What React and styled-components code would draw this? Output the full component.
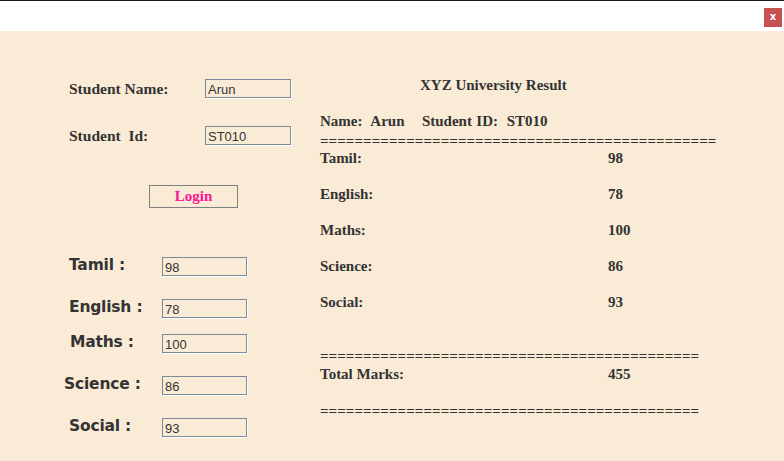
import styled, { createGlobalStyle } from "styled-components";

const GlobalStyle = createGlobalStyle`
  html, body {
    margin: 0;
    padding: 0;
    background: #fff;
  }
  * {
    box-sizing: border-box;
  }
`;

const Frame = styled.div`
  width: 784px;
  height: 461px;
  display: flex;
  flex-direction: column;
  overflow: hidden;
`;

const TitleBar = styled.div`
  height: 31px;
  border-top: 1px solid #1b1b1b;
  background: #fff;
  display: flex;
  justify-content: flex-end;
  align-items: flex-start;
  padding: 7px 2px 0 0;
`;

const CloseButton = styled.div`
  width: 18px;
  height: 19px;
  background: #c75050;
  color: #fff;
  font-family: "DejaVu Sans", sans-serif;
  font-weight: bold;
  font-size: 10px;
  line-height: 17px;
  text-align: center;
`;

const Body = styled.div`
  flex: 1;
  background: #faebd7;
  display: flex;
  padding: 46px 0 0 64px;
  color: #333;
`;

const LeftColumn = styled.div`
  width: 256px;
  display: flex;
  flex-direction: column;
`;

const FormRow = styled.div`
  display: grid;
  grid-template-columns: 141px 86px;
  align-items: center;
  margin-top: ${(p) => p.$mt}px;
`;

const FormLabel = styled.div`
  padding-left: 5px;
  font-family: "Liberation Serif", serif;
  font-weight: bold;
  font-size: 15.5px;
  line-height: 17px;
  white-space: pre;
`;

const Field = styled.div`
  width: ${(p) => p.$w}px;
  height: 19px;
  border: 1px solid #7a8a99;
  box-shadow: 1px 1px 0 #fff;
  padding: 3px 0 0 2px;
  font-family: "Liberation Sans", Arial, sans-serif;
  font-size: 13px;
  line-height: 14px;
  color: #333;
`;

const LoginButton = styled.div`
  margin: 40px 0 0 85px;
  width: 89px;
  height: 23px;
  border: 1px solid #808080;
  display: flex;
  align-items: center;
  justify-content: center;
  font-family: "Liberation Serif", serif;
  font-weight: bold;
  font-size: 15px;
  color: #ff1493;
  padding-bottom: 1px;
`;

const MarkRow = styled.div`
  display: grid;
  grid-template-columns: 98px 85px;
  align-items: center;
  margin-top: ${(p) => p.$mt}px;
`;

const MarkLabel = styled.div`
  padding-left: ${(p) => p.$indent}px;
  font-family: "DejaVu Sans", Verdana, sans-serif;
  font-weight: bold;
  font-size: 15.5px;
  line-height: 17px;
  letter-spacing: -0.2px;
  margin-top: -2px;
`;

const ResultColumn = styled.div`
  display: flex;
  flex-direction: column;
  font-family: "Liberation Serif", serif;
  font-weight: bold;
  font-size: 15px;
  line-height: 17px;
`;

const Title = styled.div`
  padding-left: 100px;
`;

const ResultLine = styled.div`
  display: grid;
  grid-template-columns: 288px auto;
  white-space: pre;
  word-spacing: ${(p) => p.$ws || 0}px;
  margin-top: ${(p) => p.$mt}px;
`;

const Separator = styled.div`
  white-space: pre;
  letter-spacing: 0.07px;
  margin-top: ${(p) => p.$mt}px;
`;

const subjects = [
  { label: "Tamil :", value: "98", mt: 49, indent: 5 },
  { label: "English :", value: "78", mt: 23, indent: 5 },
  { label: "Maths :", value: "100", mt: 16, indent: 6 },
  { label: "Science :", value: "86", mt: 23, indent: 0 },
  { label: "Social :", value: "93", mt: 23, indent: 5 },
];

const results = [
  ["Tamil:", "98"],
  ["English:", "78"],
  ["Maths:", "100"],
  ["Science:", "86"],
  ["Social:", "93"],
];

const App = () => {
  return (
    <Frame>
      <GlobalStyle />
      <TitleBar>
        <CloseButton>x</CloseButton>
      </TitleBar>
      <Body>
        <LeftColumn>
          <FormRow $mt={2}>
            <FormLabel>Student Name:</FormLabel>
            <Field $w={86}>Arun</Field>
          </FormRow>
          <FormRow $mt={28}>
            <FormLabel>Student  Id:</FormLabel>
            <Field $w={86}>ST010</Field>
          </FormRow>
          <LoginButton>Login</LoginButton>
          {subjects.map((s) => (
            <MarkRow key={s.label} $mt={s.mt}>
              <MarkLabel $indent={s.indent}>{s.label}</MarkLabel>
              <Field $w={85}>{s.value}</Field>
            </MarkRow>
          ))}
        </LeftColumn>
        <ResultColumn>
          <Title>XYZ University Result</Title>
          <ResultLine $mt={19} $ws={0.6}>
            Name:  Arun    Student ID:  ST010
          </ResultLine>
          <Separator $mt={3}>{"=".repeat(46)}</Separator>
          {results.map(([name, mark], i) => (
            <ResultLine key={name} $mt={i === 0 ? 0 : 19}>
              <span>{name}</span>
              <span>{mark}</span>
            </ResultLine>
          ))}
          <Separator $mt={37}>{"=".repeat(44)}</Separator>
          <ResultLine $mt={1}>
            <span>Total Marks:</span>
            <span>455</span>
          </ResultLine>
          <Separator $mt={20}>{"=".repeat(44)}</Separator>
        </ResultColumn>
      </Body>
    </Frame>
  );
};

export default App;
